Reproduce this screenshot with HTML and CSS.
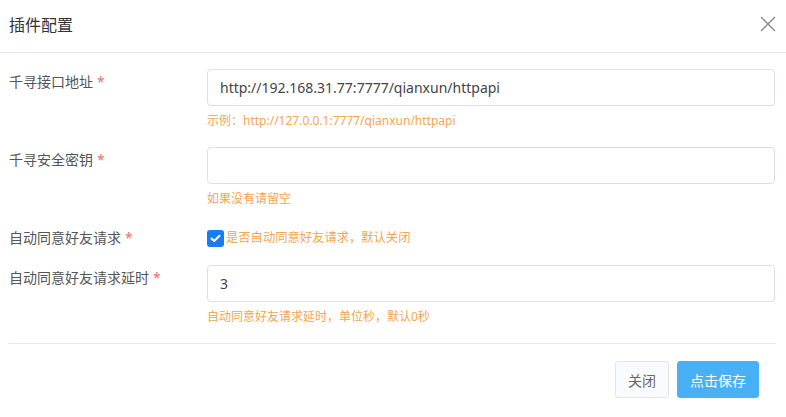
FILE: index.html
```html
<!DOCTYPE html>
<html>
<head>
    <meta charset="UTF-8">
    <title>插件配置</title>
    <link rel="stylesheet" href="styles.css">
</head>
<body>
    <div class="dialog">
        <div class="dialog-header">
            <h3>插件配置</h3>
            <span class="close">
                <svg width="16" height="16" viewBox="0 0 16 16">
                    <path d="M1 1 L15 15 M15 1 L1 15" stroke="#8a8a8a" stroke-width="1.4" fill="none"/>
                </svg>
            </span>
        </div>

        <div class="dialog-body">
            <div class="form-row">
                <label>千寻接口地址<i>*</i></label>
                <div class="control">
                    <input type="text" value="http://192.168.31.77:7777/qianxun/httpapi">
                    <p class="help">示例：http://127.0.0.1:7777/qianxun/httpapi</p>
                </div>
            </div>

            <div class="form-row">
                <label>千寻安全密钥<i>*</i></label>
                <div class="control">
                    <input type="text" value="">
                    <p class="help">如果没有请留空</p>
                </div>
            </div>

            <div class="form-row check-row">
                <label>自动同意好友请求<i>*</i></label>
                <div class="control check">
                    <span class="box">
                        <svg width="11" height="9" viewBox="0 0 11 9">
                            <path d="M1.5 4.5 L4.2 7 L9.5 1.8" stroke="#fff" stroke-width="2" fill="none" stroke-linecap="round" stroke-linejoin="round"/>
                        </svg>
                    </span>
                    <span class="help">是否自动同意好友请求，默认关闭</span>
                </div>
            </div>

            <div class="form-row">
                <label>自动同意好友请求延时<i>*</i></label>
                <div class="control">
                    <input type="text" value="3">
                    <p class="help">自动同意好友请求延时，单位秒，默认0秒</p>
                </div>
            </div>
        </div>

        <div class="dialog-footer">
            <button class="btn btn-light">关闭</button>
            <button class="btn btn-primary">点击保存</button>
        </div>
    </div>
</body>
</html>
```

FILE: styles.css
```css
body {
    margin: 0;
    background-color: #fff;
    font-family: "Noto Sans", "Noto Sans CJK SC", sans-serif;
    font-size: 14px;
    color: #555;
}

.dialog {
    width: 786px;
}

.dialog-header {
    display: flex;
    justify-content: space-between;
    align-items: center;
    height: 53px;
    padding: 0 10px 0 9px;
    border-bottom: 1px solid #e9e9e9;
    box-sizing: border-box;
}

.dialog-header h3 {
    margin: 0;
    margin-top: -4px;
    font-size: 16px;
    font-weight: normal;
    color: #333;
}

.close {
    display: flex;
    margin-top: -4px;
}

.dialog-body {
    padding: 16px 11px 0 9px;
}

.form-row {
    display: flex;
    margin-bottom: 17px;
}

.form-row label {
    width: 198px;
    flex-shrink: 0;
    padding-top: 3px;
    line-height: 20px;
    color: #555;
}

.form-row label i {
    margin-left: 4px;
    font-style: normal;
    color: #f56c6c;
}

.control {
    flex: 1;
}

.control input {
    width: 100%;
    height: 37px;
    box-sizing: border-box;
    padding: 0 12px;
    border: 1px solid #dcdfe6;
    border-radius: 4px;
    font-family: inherit;
    font-size: 14px;
    color: #444;
    outline: none;
}

.help {
    margin: 6px 0 0 0;
    font-size: 12px;
    line-height: 18px;
    color: #f5a54f;
}

.check-row {
    margin-top: 20px;
    align-items: center;
}

.check-row label {
    padding-top: 0;
}

.check {
    display: flex;
    align-items: center;
    gap: 2px;
}

.check .box {
    display: flex;
    justify-content: center;
    align-items: center;
    width: 17px;
    height: 17px;
    border-radius: 3px;
    background-color: #1a7cf5;
}

.check .help {
    margin: 0;
    font-size: 12.3px;
}

.dialog-footer {
    display: flex;
    justify-content: flex-end;
    gap: 8px;
    margin: 0 10px 0 9px;
    padding: 17px 17px 0 0;
    border-top: 1px solid #e9e9e9;
}

.btn {
    height: 37px;
    padding: 0 12px;
    border-radius: 3px;
    font-family: inherit;
    font-size: 14px;
    cursor: pointer;
}

.btn-light {
    background-color: #f9fafb;
    border: 1px solid #e3e6e9;
    color: #666;
}

.btn-primary {
    background-color: #4ab0f6;
    border: 1px solid #4ab0f6;
    color: #fff;
}
```
